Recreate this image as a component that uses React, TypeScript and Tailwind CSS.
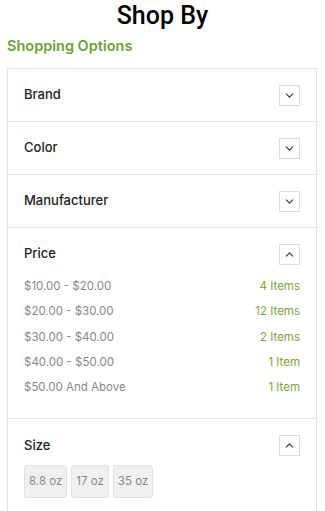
import { ChevronDown, ChevronUp } from 'lucide-react';

const prices = [
  { label: '$10.00 - $20.00', count: '4 Items' },
  { label: '$20.00 - $30.00', count: '12 Items' },
  { label: '$30.00 - $40.00', count: '2 Items' },
  { label: '$40.00 - $50.00', count: '1 Item' },
  { label: '$50.00 And Above', count: '1 Item' },
];

const sizes = ['8.8 oz', '17 oz', '35 oz'];

function Toggle({ open }: { open?: boolean }) {
  return (
    <div className="w-[21px] h-[21px] border border-[#dcdcdc] flex items-center justify-center bg-white">
      {open ? (
        <ChevronUp size={13} strokeWidth={1.9} className="text-[#333]" />
      ) : (
        <ChevronDown size={13} strokeWidth={1.9} className="text-[#333]" />
      )}
    </div>
  );
}

function Header({ title, open }: { title: string; open?: boolean }) {
  return (
    <div className="flex items-center justify-between h-[52px]">
      <span className="text-[13px] font-medium text-[#222]">{title}</span>
      <Toggle open={open} />
    </div>
  );
}

export default function App() {
  return (
    <div className="w-[325px] h-[511px] overflow-hidden bg-white font-['Inter',sans-serif]">
      {/* heading */}
      <h1 className="text-center text-[25px] leading-[30px] pt-[1px] font-medium text-black font-['Roboto',sans-serif]">
        Shop By
      </h1>
      <div className="px-[7px] mt-[5px] text-[14.5px] font-semibold text-[#6da234] leading-[20px]">
        Shopping Options
      </div>

      {/* filter box */}
      <div className="mx-[7px] mt-[12px] border border-[#e3e3e3] w-[310px]">
        {['Brand', 'Color', 'Manufacturer'].map((t) => (
          <div key={t} className="px-[16px] border-b border-[#e3e3e3]">
            <Header title={t} />
          </div>
        ))}

        <div className="px-[16px] border-b border-[#e3e3e3] pb-[18px]">
          <Header title="Price" open />
          <div className="flex flex-col -mt-[6px]">
            {prices.map((p) => (
              <div key={p.label} className="flex justify-between items-center h-[25.3px] text-[11.5px]">
                <span className="text-[#888]">{p.label}</span>
                <span className="text-[#7fa33a]">{p.count}</span>
              </div>
            ))}
          </div>
        </div>

        <div className="px-[16px] pb-[20px]">
          <Header title="Size" open />
          <div className="flex gap-[4px] -mt-[6px]">
            {sizes.map((s) => (
              <div
                key={s}
                className="h-[33px] px-[4px] flex items-center bg-[#f0f0f0] border border-[#e2e2e2] rounded-[3px] text-[11.5px] text-[#888]"
              >
                {s}
              </div>
            ))}
          </div>
        </div>
      </div>
    </div>
  );
}
